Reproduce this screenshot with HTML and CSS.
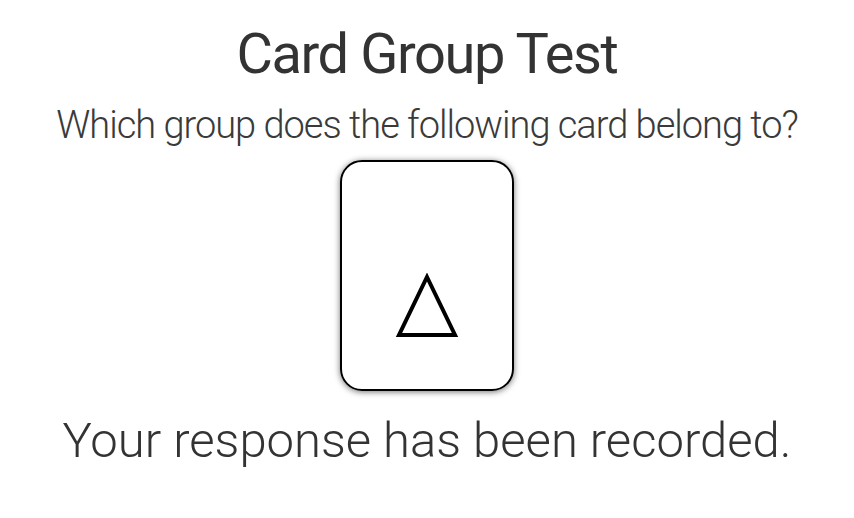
FILE: index.html
```html
<!DOCTYPE html>
<html>
<head>
<meta charset="utf-8">
<link rel="stylesheet" href="styles.css">
</head>
<body>
<main class="page">
  <h1 class="title">Card Group Test</h1>
  <p class="question">Which group does the following card belong to?</p>
  <div class="card">
    <svg class="shape" width="64" height="66" viewBox="0 0 64 66">
      <polygon points="32,4 60,62 4,62" fill="none" stroke="#000" stroke-width="4" stroke-linejoin="miter"/>
    </svg>
  </div>
  <p class="result">Your response has been recorded.</p>
</main>
</body>
</html>
```
FILE: styles.css
```css
html, body {
  margin: 0;
  padding: 0;
  background: #fff;
}
.page {
  display: flex;
  flex-direction: column;
  align-items: center;
  font-family: Roboto, "Open Sans", sans-serif;
  color: #333;
}
.title {
  margin: 14px 0 0;
  font-size: 56px;
  font-weight: 400;
  line-height: 80px;
  letter-spacing: -1.4px;
}
.question {
  margin: 6px 0 0;
  font-size: 38px;
  font-weight: 300;
  line-height: 50px;
  color: #3a3a3a;
  letter-spacing: -1px;
}
.card {
  box-sizing: border-box;
  margin-top: 10px;
  width: 174px;
  height: 231px;
  border: 2px solid #000;
  border-radius: 22px;
  box-shadow: 0 1px 6px rgba(0,0,0,0.55);
  display: flex;
  justify-content: center;
  align-items: flex-end;
  padding-bottom: 50px;
}
.shape {
  display: block;
}
.result {
  margin: 20px 0 0;
  font-size: 49px;
  font-weight: 300;
  line-height: 60px;
  color: #333;
}
```
